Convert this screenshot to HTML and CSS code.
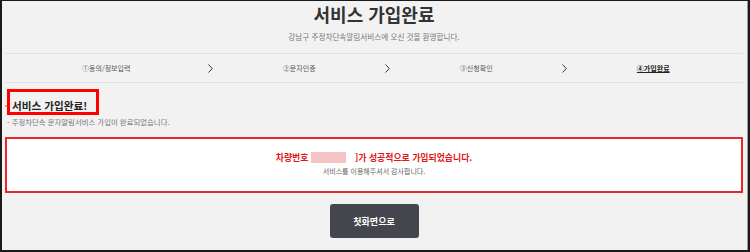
FILE: index.html
```html
<!DOCTYPE html>
<html lang="ko">
<head>
  <meta charset="UTF-8" />
  <meta name="viewport" content="width=device-width, initial-scale=1.0"/>
  <title>서비스 가입완료</title>
  <link rel="stylesheet" href="styles.css">
</head>
<body>
  <div class="frame">

    <!-- 제목 -->
    <header class="page-head">
      <h1>서비스 가입완료</h1>
      <p class="welcome">강남구 주정차단속알림서비스에 오신 것을 환영합니다.</p>
    </header>

    <!-- 단계 표시 -->
    <nav class="steps">
      <span class="step first">①동의/정보입력</span>
      <span class="arrow"><svg width="5" height="9" viewBox="0 0 5 9"><polyline points="0.5,0.5 4.3,4.5 0.5,8.5" fill="none" stroke="#333" stroke-width="1"/></svg></span>
      <span class="step">②문자인증</span>
      <span class="arrow"><svg width="5" height="9" viewBox="0 0 5 9"><polyline points="0.5,0.5 4.3,4.5 0.5,8.5" fill="none" stroke="#333" stroke-width="1"/></svg></span>
      <span class="step">③신청확인</span>
      <span class="arrow"><svg width="5" height="9" viewBox="0 0 5 9"><polyline points="0.5,0.5 4.3,4.5 0.5,8.5" fill="none" stroke="#333" stroke-width="1"/></svg></span>
      <span class="step current">④가입완료</span>
    </nav>

    <!-- 완료 안내 -->
    <section class="done">
      <h2 class="done-title">서비스 가입완료!</h2>
      <p class="done-desc">- 주정차단속 문자알림서비스 가입이 완료되었습니다.</p>

      <div class="result-box">
        <p class="result-main">차량번호 <span class="car-no"></span>]가 성공적으로 가입되었습니다.</p>
        <p class="result-sub">서비스를 이용해주셔서 감사합니다.</p>
      </div>

      <div class="btn-wrap">
        <a class="btn-home" href="#">첫화면으로</a>
      </div>
    </section>

  </div>
</body>
</html>
```

FILE: styles.css
```css
* {
  box-sizing: border-box;
}

html, body {
  margin: 0;
  padding: 0;
}

body {
  font-family: "Noto Sans CJK KR", "Noto Sans", sans-serif;
  color: #333;
  background: #1a1a1a;
}

.frame {
  width: 750px;
  height: 252px;
  background: #f2f2f2;
  border: 2px solid #1a1a1a;
  border-top-width: 1px;
  box-shadow: inset -1px 0 0 #9a9a9a;
  padding: 0 5px 0 3px;
  overflow: hidden;
}

/* 제목 */
.page-head {
  text-align: center;
}
.page-head h1 {
  margin: 2px 0 0;
  font-size: 18px;
  line-height: 22px;
  font-weight: bold;
  color: #333;
}
.welcome {
  margin: 7px 0 0;
  font-size: 7.6px;
  line-height: 10px;
  color: #777;
}

/* 단계 */
.steps {
  margin-top: 11px;
  height: 30px;
  border-top: 1px solid #e2e2e2;
  border-bottom: 1px solid #e2e2e2;
  display: grid;
  grid-template-columns: repeat(7, 88.5px);
  align-items: center;
  padding-left: 73px;
}
.step {
  text-align: center;
  font-size: 7px;
  line-height: 10px;
  color: #555;
}
.step.first {
  text-align: left;
  padding-left: 4px;
}
.step.current {
  color: #222;
  font-weight: bold;
  text-decoration: underline;
}
.arrow {
  display: flex;
  justify-content: center;
}
.arrow svg {
  display: block;
}

/* 완료 안내 */
.done {
  padding-top: 6px;
}
.done-title {
  position: relative;
  display: inline-block;
  margin: 0 0 0 2px;
  padding: 8px 9px 0 2px;
  border: 3px solid #f00;
  font-size: 10.6px;
  line-height: 12px;
  font-weight: bold;
  color: #222;
}
.done-title::before {
  content: "";
  position: absolute;
  left: -5px;
  top: 13px;
  width: 2px;
  height: 2px;
  background: #f0b020;
}
.done-desc {
  margin: 2px 0 0 2px;
  font-size: 7.4px;
  line-height: 10px;
  color: #777;
}

.result-box {
  margin-top: 10px;
  height: 56px;
  background: #fff;
  border: 2px solid #e8262b;
  text-align: center;
  padding-top: 13px;
}
.result-main {
  margin: 0;
  font-size: 8.9px;
  line-height: 12px;
  font-weight: bold;
  color: #e01818;
}
.car-no {
  display: inline-block;
  width: 35px;
  height: 11px;
  margin-right: 9px;
  vertical-align: -2px;
  background: #f4c4c6;
}
.result-sub {
  margin: 2px 0 0;
  font-size: 7px;
  line-height: 10px;
  color: #666;
}

.btn-wrap {
  margin-top: 11px;
  display: flex;
  justify-content: center;
}
.btn-home {
  display: flex;
  align-items: center;
  justify-content: center;
  width: 89px;
  height: 34px;
  background: #45454d;
  border-radius: 3px;
  color: #fff;
  font-size: 9px;
  font-weight: bold;
  text-decoration: none;
}
```
